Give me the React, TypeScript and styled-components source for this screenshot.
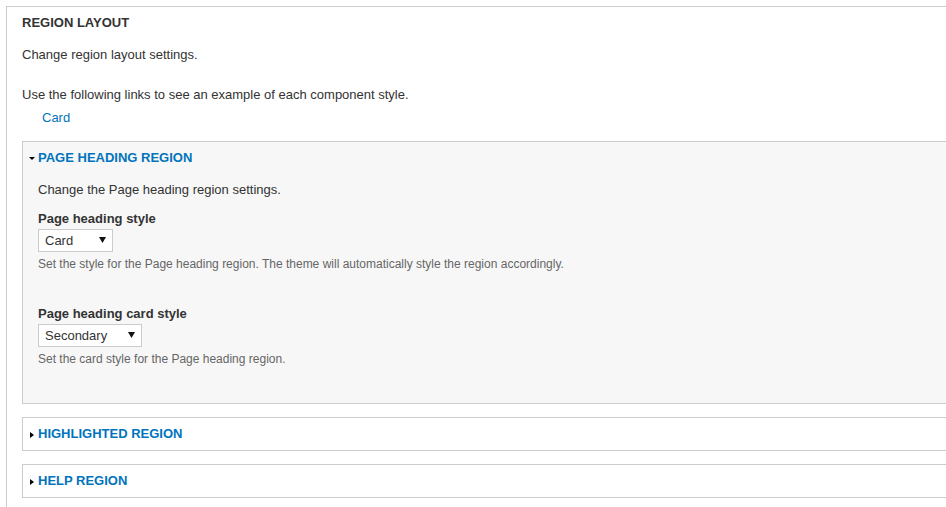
import React from 'react'
import styled, { createGlobalStyle } from 'styled-components'

const GlobalStyle = createGlobalStyle`
	html, body {
		margin: 0;
		padding: 0;
		background: #fff;
		overflow: hidden;
	}
	body {
		font-family: 'Liberation Sans', Arial, sans-serif;
		font-size: 13px;
		line-height: 20px;
		color: #333;
	}
`

const Page = styled.div`
	padding: 6px 0 0 6px;
`

const Fieldset = styled.section`
	width: 1100px;
	min-height: 560px;
	border: 1px solid #ccc;
	padding: 6px 15px 0;
	box-sizing: border-box;
`

const Legend = styled.div`
	font-weight: bold;
	text-transform: uppercase;
`

const Text = styled.p<{ $top: number }>`
	margin: ${p => p.$top}px 0 0;
`

const LinkList = styled.ul`
	list-style: none;
	margin: 3px 0 0;
	padding: 0 0 0 20px;
`

const Link = styled.a`
	color: #0074bd;
	text-decoration: none;
`

const Details = styled.div<{ $open?: boolean }>`
	margin-top: 13px;
	border: 1px solid #ccc;
	background: ${p => (p.$open ? '#f7f7f7' : '#fff')};
	padding-bottom: ${p => (p.$open ? '35px' : '0')};
`

const Summary = styled.div`
	display: flex;
	align-items: center;
	padding: 6px 0 6px 6px;
	color: #0074bd;
	font-weight: bold;
	text-transform: uppercase;
`

const Marker = styled.span<{ $open?: boolean }>`
	display: inline-block;
	width: 0;
	height: 0;
	${p =>
		p.$open
			? `
		margin: 1px 3px 0 0;
		border-left: 3px solid transparent;
		border-right: 3px solid transparent;
		border-top: 3px solid #000;
	`
			: `
		margin: 2px 4px 0 1px;
		border-top: 3px solid transparent;
		border-bottom: 3px solid transparent;
		border-left: 4px solid #000;
	`}
`

const Body = styled.div`
	padding: 0 15px;
`

const FormItem = styled.div<{ $top: number }>`
	margin-top: ${p => p.$top}px;
`

const Label = styled.label`
	display: block;
	font-weight: bold;
	line-height: 18px;
`

const Select = styled.div<{ $width: number }>`
	display: flex;
	align-items: center;
	justify-content: space-between;
	box-sizing: border-box;
	width: ${p => p.$width}px;
	height: 23px;
	margin-top: 1px;
	padding: 0 6px 0 6px;
	border: 1px solid #ccc;
	background: #fff;
	color: #333;
	font-size: 13px;
`

const Description = styled.div`
	margin-top: 3px;
	font-size: 12px;
	line-height: 18px;
	color: #666;
`

const Arrow = () => (
	<svg width="7" height="6" viewBox="0 0 7 6" style={{ marginTop: -1 }}>
		<polygon points="0,0 7,0 3.5,6" fill="#111" />
	</svg>
)

const App = () => {
	return (
		<Page>
			<GlobalStyle />
			<Fieldset>
				<Legend>Region layout</Legend>
				<Text $top={12}>Change region layout settings.</Text>
				<Text $top={20}>Use the following links to see an example of each component style.</Text>
				<LinkList>
					<li>
						<Link href="#">Card</Link>
					</li>
				</LinkList>

				<Details $open>
					<Summary>
						<Marker $open />
						Page heading region
					</Summary>
					<Body>
						<Text $top={6}>Change the Page heading region settings.</Text>
						<FormItem $top={10}>
							<Label>Page heading style</Label>
							<Select $width={75}>
								<span>Card</span>
								<Arrow />
							</Select>
							<Description>
								Set the style for the Page heading region. The theme will automatically style the region
								accordingly.
							</Description>
						</FormItem>
						<FormItem $top={32}>
							<Label>Page heading card style</Label>
							<Select $width={104}>
								<span>Secondary</span>
								<Arrow />
							</Select>
							<Description>Set the card style for the Page heading region.</Description>
						</FormItem>
					</Body>
				</Details>

				<Details>
					<Summary>
						<Marker />
						Highlighted region
					</Summary>
				</Details>

				<Details>
					<Summary>
						<Marker />
						Help region
					</Summary>
				</Details>
			</Fieldset>
		</Page>
	)
}

export default App
